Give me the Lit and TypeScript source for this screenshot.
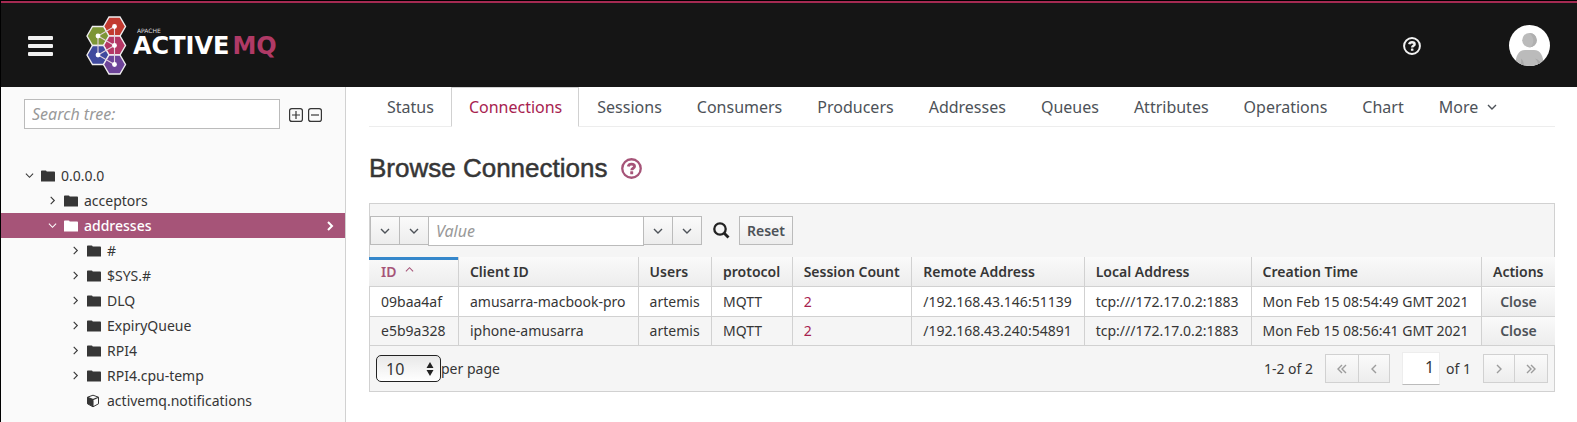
import { LitElement, html, svg, css } from "lit";
import { customElement } from "lit/decorators.js";
import { classMap } from "lit/directives/class-map.js";

interface TreeNode {
  label: string;
  level: number;
  state: "open" | "closed" | "leaf";
  selected?: boolean;
}

const TREE: TreeNode[] = [
  { label: "0.0.0.0", level: 0, state: "open" },
  { label: "acceptors", level: 1, state: "closed" },
  { label: "addresses", level: 1, state: "open", selected: true },
  { label: "#", level: 2, state: "closed" },
  { label: "$SYS.#", level: 2, state: "closed" },
  { label: "DLQ", level: 2, state: "closed" },
  { label: "ExpiryQueue", level: 2, state: "closed" },
  { label: "RPI4", level: 2, state: "closed" },
  { label: "RPI4.cpu-temp", level: 2, state: "closed" },
  { label: "activemq.notifications", level: 2, state: "leaf" },
];

const TABS = [
  "Status", "Connections", "Sessions", "Consumers", "Producers", "Addresses",
  "Queues", "Attributes", "Operations", "Chart",
];

const COLUMNS = [
  "Client ID", "Users", "protocol", "Session Count", "Remote Address",
  "Local Address", "Creation Time",
];

const ROWS = [
  ["09baa4af", "amusarra-macbook-pro", "artemis", "MQTT", "2", "/192.168.43.146:51139", "tcp:///172.17.0.2:1883", "Mon Feb 15 08:54:49 GMT 2021"],
  ["e5b9a328", "iphone-amusarra", "artemis", "MQTT", "2", "/192.168.43.240:54891", "tcp:///172.17.0.2:1883", "Mon Feb 15 08:56:41 GMT 2021"],
];

const CHEVRONS = {
  down: "M1 3l4 4 4-4",
  up: "M1 7l4-4 4 4",
  right: "M3 1l4 4-4 4",
  left: "M7 1L3 5l4 4",
  first: "M5 1L1 5l4 4M9 1L5 5l4 4",
  last: "M1 1l4 4-4 4M5 1l4 4-4 4",
};

const chevron = (kind: keyof typeof CHEVRONS) => html`
  <svg class="chevron" viewBox="0 0 10 10" aria-hidden="true"><path d=${CHEVRONS[kind]} /></svg>
`;

const helpIcon = html`
  <svg class="help-icon" viewBox="0 0 20 20" aria-hidden="true">
    <circle cx="10" cy="10" r="8.8" fill="none" stroke="currentColor" stroke-width="2.2" />
    <path d="M6.900 8.100C7.300 6.500 8.400 5.800 10 5.800c1.900 0 2.900.9 2.900 2.200 0 1.800-2.700 1.700-2.700 3.600" fill="none" stroke="currentColor" stroke-width="2.700" />
    <rect x="8.800" y="12.700" width="2.800" height="2.700" rx=".5" fill="currentColor" />
  </svg>
`;

const folderIcon = html`
  <svg class="node-icon" viewBox="0 0 14 12" aria-hidden="true">
    <path d="M0 1.2Q0 .4.8.4H4.6Q5.4.4 5.6 1.2V1.6H13.2Q14 1.6 14 2.4V11.5H0z" fill="currentColor" />
  </svg>
`;

const cubeIcon = html`
  <svg class="node-icon" viewBox="0 0 14 14" aria-hidden="true">
    <path d="M6 1.2 11.5 3.2V9.8L6 12.8.5 9.8V3.2z" fill="#fafafa" stroke="currentColor" stroke-width="1" stroke-linejoin="round" />
    <path d="M.5 3.2 6 5.6V12.8L.5 9.8z" fill="currentColor" />
    <path d="M.5 3.2 6 5.6 11.5 3.2M6 5.6V12.8" fill="none" stroke="currentColor" stroke-width="1.1" />
  </svg>
`;

const boxIcon = (plus: boolean) => html`
  <svg class="box-icon" viewBox="0 0 14 14" aria-hidden="true">
    <rect x=".6" y=".6" width="12.8" height="12.8" rx="2.2" />
    <path d=${plus ? "M3 7h8M7 3v8" : "M3 7h8"} />
  </svg>
`;

const CELLS: [number, number, string][] = [
  [28.5, 10.5, "#c23a30"],
  [12, 20, "#7d9636"],
  [28.5, 29.5, "#b43765"],
  [12, 39, "#404a9e"],
  [28.5, 48.5, "#6d4499"],
];

const hexPoints = (x: number, y: number) =>
  [[-11, 0], [-5.5, -9.5], [5.5, -9.5], [11, 0], [5.5, 9.5], [-5.5, 9.5]]
    .map(([dx, dy]) => `${x + dx},${y + dy}`)
    .join(" ");

const hexLogo = html`
  <svg class="logo-mark" viewBox="0 0 41 59" aria-hidden="true">
    ${CELLS.map(([x, y, c]) => svg`<polygon points=${hexPoints(x, y)} fill=${c} stroke="#f0eef0" stroke-width="1.4" />`)}
    <path d="M28.5 10.5 12 20V39L28.5 48.5V10.5M12 20 28.5 29.5 12 39" fill="none" stroke="#e3d3dd" stroke-width="1.1" />
    ${CELLS.map(([x, y]) => svg`<circle cx=${x} cy=${y} r="2.4" fill="#fff" />`)}
  </svg>
`;

@customElement("app-root")
export class AppRoot extends LitElement {
  static styles = css`
    :host {
      display: flex;
      flex-direction: column;
      box-sizing: border-box;
      min-height: 100vh;
      border-left: 1px solid #000;
      background: #fff;
      color: #363636;
      font: 14px/20px "Noto Sans", sans-serif;
    }
    *, *::before, *::after { box-sizing: border-box; }
    button, input, select { font: inherit; color: inherit; margin: 0; border-radius: 0; }
    button { display: flex; align-items: center; justify-content: center; background: none; border: 0; padding: 0; }
    a { color: inherit; text-decoration: none; }
    ul { list-style: none; margin: 0; padding: 0; }
    svg { display: block; flex: none; }
    ::placeholder { color: #999; font-style: italic; opacity: 1; }
    .chevron { width: 10px; height: 10px; fill: none; stroke: currentColor; stroke-width: 1.4; }

    .masthead {
      display: flex;
      align-items: center;
      height: 87px;
      padding: 3px 27px 0;
      background: #151515;
      border-top: 1px solid #000;
      box-shadow: inset 0 2px #a52a52;
      color: #f2f2f2;
    }
    .burger { flex-direction: column; gap: 4px; }
    .burger i { width: 25px; height: 4px; border-radius: 1px; background: #f0f0f0; }
    .brand { display: flex; align-items: center; margin-left: 33px; gap: 6px; }
    .logo-mark { width: 41px; height: 59px; }
    .wordmark { display: flex; flex-direction: column; font-family: "DejaVu Sans", sans-serif; padding-bottom: 5px; }
    .apache { font-size: 6px; line-height: 6px; padding-left: 4px; color: #ddd; }
    .product { font-size: 24px; line-height: 24px; font-weight: 700; color: #fff; }
    .product b { margin-left: 3px; color: #b03a66; }
    .masthead-tools { display: flex; align-items: center; margin-left: auto; gap: 88px; }
    .masthead .help-icon { width: 18px; height: 18px; }
    .avatar { width: 41px; height: 41px; }

    .body { display: flex; flex: 1; }
    .sidebar { flex: none; width: 345px; padding-top: 12px; background: #fafafa; border-right: 1px solid #d1d1d1; }
    .search { display: flex; align-items: center; padding: 0 23px; gap: 5px; }
    .search input {
      flex: 1;
      min-width: 0;
      height: 30px;
      margin-right: 4px;
      padding: 0 7px;
      border: 1px solid #bbb;
      background: #fff;
      font-size: 16px;
    }
    .search button { padding-top: 2px; }
    .box-icon { width: 14px; height: 14px; fill: none; stroke: #363636; stroke-width: 1.2; }
    .tree { padding-top: 34px; }
    .node { display: flex; align-items: center; height: 25px; padding-right: 10px; }
    .level-0 { padding-left: 24px; }
    .level-1 { padding-left: 47px; }
    .level-2 { padding-left: 70px; }
    .toggle { width: 10px; margin-right: 6px; }
    .node .chevron { stroke-width: 1.2; width: 9px; height: 9px; }
    .node-icon { width: 14px; height: 14px; margin-right: 6px; }
    .selected { background: #a65478; color: #fff; font-weight: 500; }
    .node .current { margin-left: auto; }
    .current .chevron { stroke-width: 2; width: 10px; height: 10px; }

    .main { flex: 1; min-width: 0; padding: 0 22px 31px 23px; }
    .tabs { display: flex; height: 40px; border-bottom: 1px solid #ededed; color: #4d5258; font-size: 16px; }
    .tab { display: flex; align-items: center; height: 40px; padding: 0 17px 0 18px; gap: 9px; }
    .tab.active { padding: 0 16px 0 17px; border: 1px solid #d1d1d1; border-bottom-color: #fff; background: #fff; color: #a7224f; }
    .title { display: flex; align-items: center; gap: 14px; margin: 26px 0 20px; font: 400 26px/30px "Liberation Sans", sans-serif; -webkit-text-stroke: 0.5px #363636; }
    .title .help-icon { width: 21px; height: 21px; color: #a65478; }

    .panel { background: #f5f5f5; border: 1px solid #d1d1d1; }
    .toolbar { display: flex; align-items: center; height: 53px; }
    .grey { height: 29px; background: linear-gradient(#fafafa, #ededed); border: 1px solid #bbb; color: #4d5258; }
    .drop { width: 30px; margin-right: -1px; }
    .filter { width: 216px; height: 30px; padding: 0 7px; border: 1px solid #bbb; background: #fff; font-size: 16px; margin-right: -1px; }
    .search-button { margin: 0 9px 0 12px; }
    .search-button svg { width: 17px; height: 17px; }
    .reset { padding: 0 7px; font-weight: 600; }

    table { width: calc(100% + 2px); margin: 0 -1px; border-collapse: separate; border-spacing: 0; white-space: nowrap; }
    th, td { height: 30px; padding: 0 11px; text-align: left; border-bottom: 1px solid #d1d1d1; border-right: 1px solid #d1d1d1; }
    th { font-weight: 600; background: linear-gradient(#fafafa, #ededed); }
    th:first-child { padding-left: 12px; }
    th:last-child { border-right: 0; }
    td { height: 29px; background: #fff; }
    tbody tr:first-child td { height: 30px; }
    td:first-child { border-left: 1px solid #d1d1d1; padding-right: 12px; }
    tr:nth-child(even) td { background: #f5f5f5; }
    .sorted { color: #a65478; box-shadow: inset 0 3px #3587cb; }
    .sorted button { gap: 9px; }
    .sorted .chevron { stroke-width: 1.2; width: 9px; height: 9px; margin-bottom: 4px; }
    .count { color: #a7224f; }
    td.action { padding: 0; border-right: 0; }
    .action button { width: 100%; height: 28px; font-weight: 600; color: #4d5258; background: linear-gradient(#fafafa, #ededed); }

    .footer { display: flex; align-items: center; height: 45px; padding: 0 6px; }
    .size { display: grid; align-items: center; }
    .size select {
      grid-area: 1 / 1;
      appearance: none;
      width: 65px;
      height: 27px;
      padding: 0 9px;
      border: 1px solid #222;
      border-radius: 5px;
      background: linear-gradient(#e8e8e8, #fff);
      font-size: 16px;
    }
    .size svg { grid-area: 1 / 1; width: 8px; height: 14px; justify-self: end; margin-right: 7px; pointer-events: none; }
    .range { margin-left: auto; margin-right: 12px; }
    .pager { display: flex; color: #9c9c9c; }
    .pager .grey { width: 32px; border-color: #d1d1d1; color: inherit; }
    .pager .outer { width: 34px; }
    .pager .grey + .grey { margin-left: -1px; }
    .page { width: 38px; height: 33px; margin: 0 6px 0 12px; padding: 0 5px 3px; text-align: right; border: 1px solid #ededed; border-bottom-color: #bbb; background: #fff; font-size: 16px; }
    .total { margin-right: 12px; }
  `;

  private renderNode(node: TreeNode) {
    const classes = { node: true, [`level-${node.level}`]: true, selected: !!node.selected };
    return html`
      <li class=${classMap(classes)}>
        <span class="toggle">${node.state === "leaf" ? "" : chevron(node.state === "open" ? "down" : "right")}</span>
        ${node.state === "leaf" ? cubeIcon : folderIcon}
        <span>${node.label}</span>
        ${node.selected ? html`<span class="current">${chevron("right")}</span>` : ""}
      </li>
    `;
  }

  render() {
    return html`
      <header class="masthead">
        <button class="burger" aria-label="Toggle navigation"><i></i><i></i><i></i></button>
        <a class="brand" href="#">
          ${hexLogo}
          <span class="wordmark">
            <span class="apache">APACHE</span>
            <span class="product">ACTIVE<b>MQ</b></span>
          </span>
        </a>
        <div class="masthead-tools">
          <button aria-label="Help">${helpIcon}</button>
          <button aria-label="User">
            <svg class="avatar" viewBox="0 0 41 41" aria-hidden="true">
              <defs><clipPath id="disc"><circle cx="20.5" cy="20.5" r="20.5" /></clipPath></defs>
              <g clip-path="url(#disc)">
                <rect width="41" height="41" fill="#fff" />
                <path d="M6 41C7 30 9.500 25 16 25H25C31.500 25 34 30 35 41z" fill="#bbb" />
                <path d="M11.500 41C12 38 12.500 36 12 33.500 14 35 15 38 14.800 41zM29.500 41C29 38 28.500 36 26 33.500 29 34.500 31 36 32 38z" fill="#a8a8a8" />
                <circle cx="20.500" cy="15.200" r="7.300" fill="#bbb" />
                <path d="M20.500 7.900a7.300 7.300 0 0 1 0 14.600c4-2 6-9 0-14.600z" fill="#b0b0b0" />
              </g>
            </svg>
          </button>
        </div>
      </header>

      <div class="body">
        <aside class="sidebar">
          <div class="search">
            <input type="text" placeholder="Search tree:" aria-label="Search tree" />
            <button aria-label="Expand all">${boxIcon(true)}</button>
            <button aria-label="Collapse all">${boxIcon(false)}</button>
          </div>
          <ul class="tree">${TREE.map((n) => this.renderNode(n))}</ul>
        </aside>

        <main class="main">
          <nav class="tabs">
            ${TABS.map((t) => html`<a href="#" class=${classMap({ tab: true, active: t === "Connections" })}>${t}</a>`)}
            <button class="tab">More ${chevron("down")}</button>
          </nav>

          <h1 class="title">Browse Connections <button aria-label="About connections">${helpIcon}</button></h1>

          <section class="panel">
            <div class="toolbar">
              <button class="grey drop" aria-label="Filter field">${chevron("down")}</button>
              <button class="grey drop" aria-label="Filter operation">${chevron("down")}</button>
              <input class="filter" type="text" placeholder="Value" aria-label="Filter value" />
              <button class="grey drop" aria-label="Sort field">${chevron("down")}</button>
              <button class="grey drop" aria-label="Sort order">${chevron("down")}</button>
              <button class="search-button" aria-label="Search">
                <svg viewBox="0 0 17 17" aria-hidden="true">
                  <g fill="none" stroke="#222" stroke-width="2.3">
                    <circle cx="7" cy="7" r="5.700" />
                    <path d="M11 11l4.500 4.500" stroke-width="2.800" />
                  </g>
                </svg>
              </button>
              <button class="grey reset">Reset</button>
            </div>

            <table>
              <thead>
                <tr>
                  <th class="sorted"><button>ID ${chevron("up")}</button></th>
                  ${COLUMNS.map((c) => html`<th>${c}</th>`)}
                  <th>Actions</th>
                </tr>
              </thead>
              <tbody>
                ${ROWS.map((row) => html`
                  <tr>
                    ${row.map((v, i) => html`<td>${i === 4 ? html`<a class="count" href="#">${v}</a>` : v}</td>`)}
                    <td class="action"><button>Close</button></td>
                  </tr>
                `)}
              </tbody>
            </table>

            <div class="footer">
              <span class="size">
                <select id="page-size"><option>10</option></select>
                <svg viewBox="0 0 8 14" aria-hidden="true"><path d="M4 0l3.500 6h-7zM4 14l3.500-6h-7z" fill="#222" /></svg>
              </span>
              <label for="page-size">per page</label>
              <span class="range">1-2 of 2</span>
              <span class="pager">
                <button class="grey outer" aria-label="First page">${chevron("first")}</button>
                <button class="grey" aria-label="Previous page">${chevron("left")}</button>
              </span>
              <input class="page" type="text" value="1" aria-label="Page" />
              <span class="total">of 1</span>
              <span class="pager">
                <button class="grey" aria-label="Next page">${chevron("right")}</button>
                <button class="grey outer" aria-label="Last page">${chevron("last")}</button>
              </span>
            </div>
          </section>
        </main>
      </div>
    `;
  }
}
